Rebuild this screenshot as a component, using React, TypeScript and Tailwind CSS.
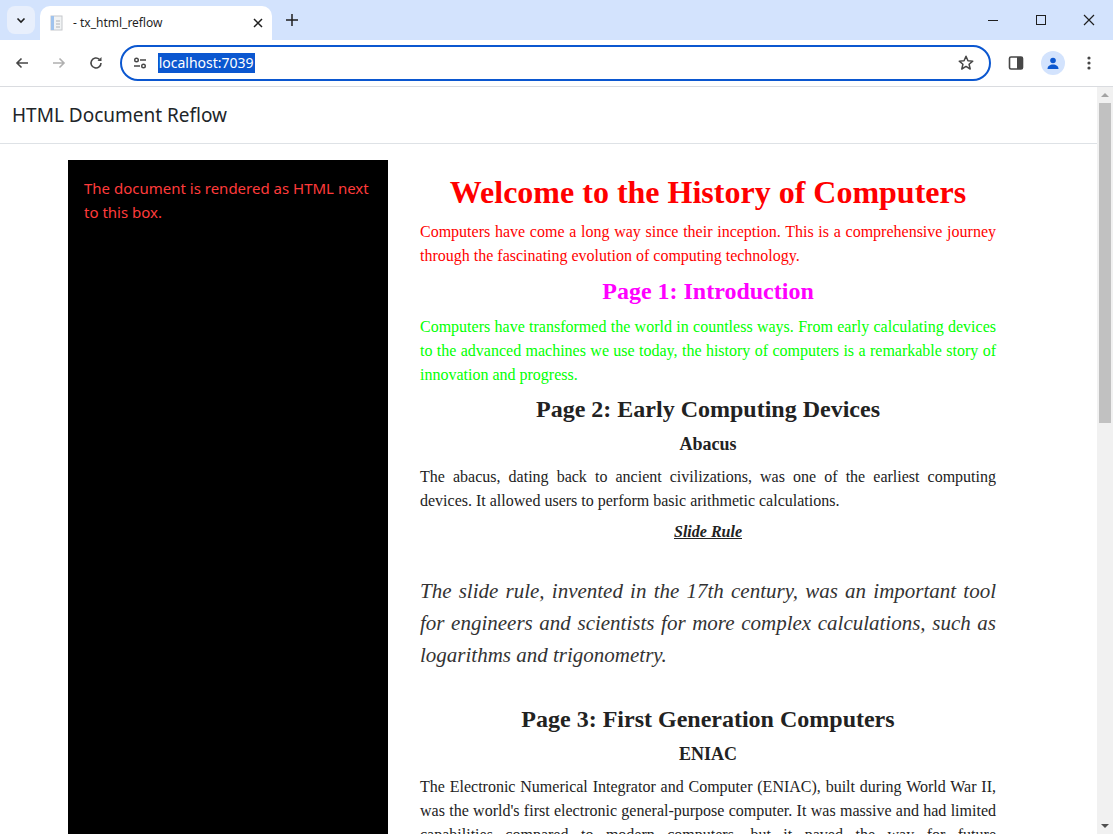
import React from "react";

const serif = { fontFamily: '"Liberation Serif", "Times New Roman", serif' };

export default function App() {
  return (
    <div className="w-[1113px] h-[834px] overflow-hidden flex flex-col bg-white" style={{ fontFamily: '"Noto Sans", Arial, sans-serif' }}>
      {/* tab bar */}
      <div className="h-[40px] bg-[#d3e3fd] flex items-end relative shrink-0">
        <div className="absolute left-[7px] top-[6px] w-[28px] h-[28px] rounded-lg bg-[#e8effc] flex items-center justify-center">
          <svg width="12" height="12" viewBox="0 0 12 12"><path d="M2.5 4.5 6 8l3.5-3.5" stroke="#1f1f1f" strokeWidth="1.6" fill="none" /></svg>
        </div>
        <div className="ml-[40px] w-[232px] h-[34px] bg-white rounded-t-[10px] flex items-center px-[9px] text-[12px] text-[#1f1f1f]">
          <svg width="16" height="16" viewBox="0 0 16 16"><rect x="2" y="1" width="11" height="14" fill="#f1f3f4" stroke="#c5c8cc" /><rect x="2" y="1" width="3" height="14" fill="#9fc3ee" /><path d="M7 6h4M7 9h4M7 12h4" stroke="#b0b4b8" /></svg>
          <span className="ml-[8px]">- tx_html_reflow</span>
          <svg className="ml-auto" width="10" height="10" viewBox="0 0 10 10"><path d="M1 1l8 8M9 1l-8 8" stroke="#1f1f1f" strokeWidth="1.5" /></svg>
        </div>
        <div className="absolute left-[284px] top-[12px]">
          <svg width="16" height="16" viewBox="0 0 16 16"><path d="M8 2v12M2 8h12" stroke="#1f1f1f" strokeWidth="1.5" /></svg>
        </div>
        <div className="absolute right-0 top-0 h-[40px] flex">
          <div className="w-[48px] flex items-center justify-center"><div className="w-[10px] h-px bg-[#1f1f1f]" /></div>
          <div className="w-[48px] flex items-center justify-center"><div className="w-[10px] h-[10px] border border-[#1f1f1f]" /></div>
          <div className="w-[48px] flex items-center justify-center"><svg width="12" height="12" viewBox="0 0 12 12"><path d="M1 1l10 10M11 1 1 11" stroke="#1f1f1f" strokeWidth="1.2" /></svg></div>
        </div>
      </div>
      {/* toolbar */}
      <div className="h-[47px] bg-white flex items-center shrink-0 border-b border-[#dadce0]">
        <div className="w-[44px] flex justify-center">
          <svg width="16" height="16" viewBox="0 0 16 16"><path d="M14 8H3M7.5 3.5 3 8l4.5 4.5" stroke="#474747" strokeWidth="1.6" fill="none" /></svg>
        </div>
        <div className="w-[30px] flex justify-center">
          <svg width="16" height="16" viewBox="0 0 16 16"><path d="M2 8h11M8.5 3.5 13 8l-4.5 4.5" stroke="#b0b0b0" strokeWidth="1.6" fill="none" /></svg>
        </div>
        <div className="w-[44px] flex justify-center">
          <svg width="16" height="16" viewBox="0 0 16 16"><path d="M13 8a5 5 0 1 1-1.6-3.7" stroke="#474747" strokeWidth="1.6" fill="none" /><path d="M13.5 2v4h-4" fill="#474747" /></svg>
        </div>
        <div className="ml-[2px] w-[874px] h-[36px] rounded-full border-2 border-[#0b57d0] flex items-center px-[10px]">
          <svg width="16" height="16" viewBox="0 0 16 16"><circle cx="4.5" cy="5" r="1.8" stroke="#474747" fill="none" strokeWidth="1.4" /><path d="M8 5h6M2 11h6" stroke="#474747" strokeWidth="1.4" /><circle cx="11.5" cy="11" r="1.8" stroke="#474747" fill="none" strokeWidth="1.4" /></svg>
          <span className="ml-[10px] bg-[#0b57d0] text-white text-[14px] leading-[20px] px-[1px]">localhost:7039</span>
          <svg className="ml-auto mr-[4px]" width="18" height="18" viewBox="0 0 24 24"><path d="M12 3l2.6 6 6.4.5-4.9 4.2 1.5 6.3L12 16.6 6.4 20l1.5-6.3L3 9.5 9.4 9z" stroke="#474747" strokeWidth="2" fill="none" strokeLinejoin="round" /></svg>
        </div>
        <div className="w-[50px] flex justify-center">
          <svg width="16" height="16" viewBox="0 0 16 16"><rect x="1.5" y="2" width="13" height="12" rx="1.5" stroke="#474747" strokeWidth="1.6" fill="none" /><rect x="9" y="2" width="5.5" height="12" fill="#474747" /></svg>
        </div>
        <div className="w-[24px] h-[24px] rounded-full bg-[#d3e3fd] flex items-center justify-center">
          <svg width="14" height="14" viewBox="0 0 14 14"><circle cx="7" cy="4.5" r="2.8" fill="#0b57d0" /><path d="M1.5 13c0-3 2.5-4.5 5.5-4.5s5.5 1.5 5.5 4.5z" fill="#0b57d0" /></svg>
        </div>
        <div className="w-[48px] flex justify-center">
          <svg width="4" height="16" viewBox="0 0 4 16"><circle cx="2" cy="3" r="1.6" fill="#474747" /><circle cx="2" cy="8" r="1.6" fill="#474747" /><circle cx="2" cy="13" r="1.6" fill="#474747" /></svg>
        </div>
      </div>
      {/* page */}
      <div className="flex flex-1 min-h-0">
        <div className="flex-1 flex flex-col min-w-0">
          <div className="h-[57px] shrink-0 border-b border-[#dee2e6] flex items-center px-[12px] text-[19px] text-[#212529]" style={{ fontFamily: '"Segoe UI", "Noto Sans", sans-serif' }}>HTML Document Reflow</div>
          <div className="flex pt-[16px] pl-[68px] min-h-0 flex-1">
            <div className="w-[320px] bg-black text-[#ff3b3b] text-[15px] leading-[24px] px-[16px] pt-[16px] shrink-0">
              The document is rendered as HTML next to this box.
            </div>
            <div className="ml-[32px] w-[576px] text-[16px] leading-[24px] text-justify text-[#222]" style={serif}>
              <h1 className="text-[32px] leading-[40px] font-bold text-[#ff0000] text-center mt-[12px] mb-[8px]">Welcome to the History of Computers</h1>
              <p className="text-[#ff0000]">Computers have come a long way since their inception. This is a comprehensive journey through the fascinating evolution of computing technology.</p>
              <h2 className="text-[24px] leading-[30px] font-bold text-[#ff00ff] text-center mt-[8px] mb-[9px]">Page 1: Introduction</h2>
              <p className="text-[#00ff00]">Computers have transformed the world in countless ways. From early calculating devices to the advanced machines we use today, the history of computers is a remarkable story of innovation and progress.</p>
              <h2 className="text-[24px] leading-[30px] font-bold text-center mt-[7px] mb-[8px]">Page 2: Early Computing Devices</h2>
              <h3 className="text-[18px] leading-[24px] font-bold text-center mb-[9px]">Abacus</h3>
              <p>The abacus, dating back to ancient civilizations, was one of the earliest computing devices. It allowed users to perform basic arithmetic calculations.</p>
              <h4 className="text-[16px] leading-[22px] font-bold italic underline text-center mt-[8px]">Slide Rule</h4>
              <p className="text-[21px] leading-[32px] italic mt-[32px] text-[#333]">The slide rule, invented in the 17th century, was an important tool for engineers and scientists for more complex calculations, such as logarithms and trigonometry.</p>
              <h2 className="text-[24px] leading-[30px] font-bold text-center mt-[33px] mb-[8px]">Page 3: First Generation Computers</h2>
              <h3 className="text-[18px] leading-[24px] font-bold text-center mb-[9px]">ENIAC</h3>
              <p>The Electronic Numerical Integrator and Computer (ENIAC), built during World War II, was the world's first electronic general-purpose computer. It was massive and had limited capabilities compared to modern computers, but it paved the way for future developments.</p>
            </div>
          </div>
        </div>
        <div className="w-[16px] bg-[#f1f1f1] flex flex-col items-center shrink-0">
          <div className="h-[16px] flex items-center justify-center"><div className="w-0 h-0 border-l-[4px] border-r-[4px] border-b-[4px] border-l-transparent border-r-transparent border-b-[#a3a3a3]" /></div>
          <div className="w-[12px] h-[320px] bg-[#c1c1c1]" />
          <div className="mt-auto h-[16px] flex items-center justify-center"><div className="w-0 h-0 border-l-[4px] border-r-[4px] border-t-[4px] border-l-transparent border-r-transparent border-t-[#505050]" /></div>
        </div>
      </div>
    </div>
  );
}
